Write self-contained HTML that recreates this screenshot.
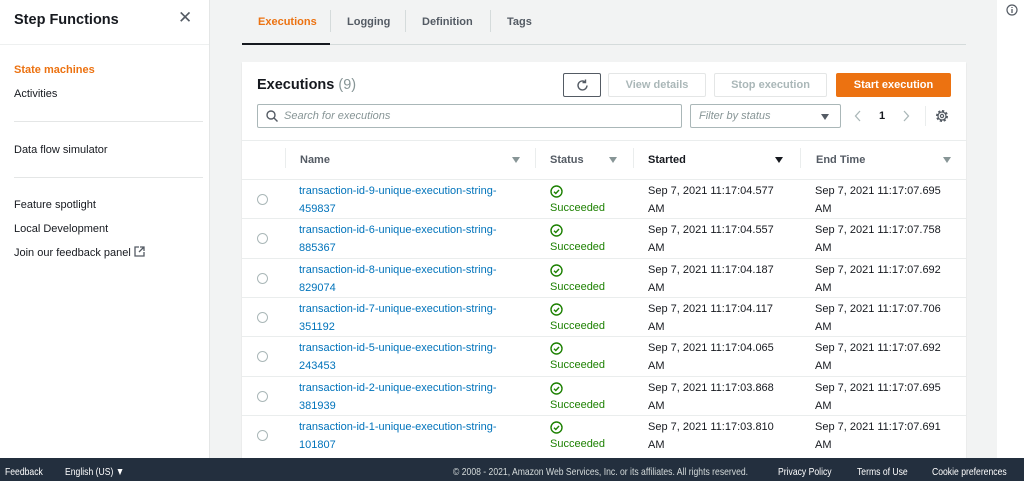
<!DOCTYPE html>
<html><head><meta charset="utf-8"><style>
*{box-sizing:border-box;margin:0;padding:0}
body{width:1024px;height:481px;overflow:hidden;background:#f2f3f3;font-family:"Liberation Sans",Arial,sans-serif;color:#16191f;position:relative}
.a{position:absolute}
.side{left:0;top:0;width:210px;height:458px;background:#fff;border-right:1px solid #e4e6e6}
.side div{position:absolute;left:14px;font-size:11px;color:#16191f}
.hr{position:absolute;left:5px;width:189px;height:1px;background:#e4e6e6}
.tab{top:16px;font-size:11px;font-weight:bold;color:#545b64}
.card{left:242px;top:62px;width:724px;height:396px;background:#fff;box-shadow:0 1px 1px rgba(0,0,0,.15)}
.btn{height:24px;border:1px solid #e4e6e6;font-size:11px;font-weight:bold;color:#aab7b8;text-align:center;line-height:22px;border-radius:2px;background:#fff}
.row{position:absolute;left:0;width:724px;height:39px;border-top:1px solid #eaeded;font-size:11px}
.row span{position:absolute;line-height:18px;top:2px}
.nm{left:57px;color:#0073bb}
.st{left:308px;color:#1d8102;top:19px!important}
.ti{left:406px}
.en{left:573px}
.rad{position:absolute;left:15px;top:14px;width:11px;height:11px;border:1px solid #aab7b8;border-radius:50%}
.ok{position:absolute;left:308px;top:5px}
.th{position:absolute;top:92px;font-size:11px;font-weight:bold;color:#545b64}
.sep{position:absolute;top:86px;width:1px;height:20px;background:#eaeded}
.tri{position:absolute;top:95px;width:0;height:0;border-left:4px solid transparent;border-right:4px solid transparent;border-top:6px solid #879596}
.foot{left:0;top:458px;width:1024px;height:23px;background:#232f3e;color:#fff;font-size:10.5px}
.foot span{position:absolute;top:8px;transform:scaleX(.82);transform-origin:left;white-space:nowrap}
</style></head><body>
<div class="a side">
<div style="top:12px;font-size:14.5px;font-weight:bold">Step Functions</div>
<div style="left:178px;top:8px;font-size:17px;color:#545b64">✕</div>
<div class="hr" style="top:44px;left:0;width:209px;background:#eef0f0"></div>
<div style="top:64px;color:#ec7211;font-weight:bold">State machines</div>
<div style="top:88px">Activities</div>
<div class="hr" style="top:121px"></div>
<div style="top:144px">Data flow simulator</div>
<div class="hr" style="top:177px"></div>
<div style="top:199px">Feature spotlight</div>
<div style="top:223px">Local Development</div>
<div style="top:246px">Join our feedback panel <svg width="11" height="11" viewBox="0 0 11 11" style="vertical-align:-1px"><path d="M5 1H1v9h9V6M6 1h4v4M10 1L5 6" fill="none" stroke="#545b64" stroke-width="1.3"/></svg></div>
</div>
<div class="a" style="left:997px;top:0;width:27px;height:458px;background:#fff"></div>
<svg class="a" style="left:1006px;top:4px" width="12" height="12"><circle cx="6" cy="6" r="5" fill="none" stroke="#545b64" stroke-width="1.2"/><path d="M6 5v4M6 3v1" stroke="#545b64" stroke-width="1.3"/></svg>
<div class="a tab" style="left:258px;color:#ec7211">Executions</div>
<div class="a" style="left:330px;top:10px;width:1px;height:22px;background:#d5dbdb"></div>
<div class="a tab" style="left:347px">Logging</div>
<div class="a" style="left:405px;top:10px;width:1px;height:22px;background:#d5dbdb"></div>
<div class="a tab" style="left:422px">Definition</div>
<div class="a" style="left:490px;top:10px;width:1px;height:22px;background:#d5dbdb"></div>
<div class="a tab" style="left:507px">Tags</div>
<div class="a" style="left:242px;top:44px;width:724px;height:1px;background:#d5dbdb"></div>
<div class="a" style="left:242px;top:43px;width:88px;height:2px;background:#16191f"></div>
<div class="a card">
<div class="a" style="left:15px;top:15px;font-size:14.5px;font-weight:bold">Executions <span style="font-weight:normal;color:#879596">(9)</span></div>
<div class="a btn" style="left:321px;top:11px;width:38px;border-color:#545b64;color:#545b64"><svg width="13" height="13" viewBox="0 0 13 13" style="margin-top:5px"><path d="M11 6.5A4.5 4.5 0 1 1 9 2.7M9.5 0.5v3h-3" fill="none" stroke="#545b64" stroke-width="1.4"/></svg></div>
<div class="a btn" style="left:366px;top:11px;width:98px">View details</div>
<div class="a btn" style="left:472px;top:11px;width:113px">Stop execution</div>
<div class="a btn" style="left:594px;top:11px;width:115px;background:#ec7211;border-color:#ec7211;color:#fff">Start execution</div>
<div class="a" style="left:15px;top:42px;width:425px;height:24px;border:1px solid #aab7b8;border-radius:2px"><svg class="a" style="left:8px;top:5px" width="12" height="12"><circle cx="5" cy="5" r="4" fill="none" stroke="#545b64" stroke-width="1.4"/><path d="M8 8l3.5 3.5" stroke="#545b64" stroke-width="1.4"/></svg><span class="a" style="left:26px;top:5px;font-size:11px;font-style:italic;color:#879596">Search for executions</span></div>
<div class="a" style="left:448px;top:42px;width:151px;height:24px;border:1px solid #aab7b8;border-radius:2px"><span class="a" style="left:8px;top:5px;font-size:11px;font-style:italic;color:#879596">Filter by status</span><div class="a" style="left:130px;top:9px;border-left:4px solid transparent;border-right:4px solid transparent;border-top:6px solid #545b64"></div></div>
<svg class="a" style="left:612px;top:48px" width="8" height="12"><path d="M6 1L1.5 6 6 11" fill="none" stroke="#aab7b8" stroke-width="1.3"/></svg>
<div class="a" style="left:637px;top:48px;font-size:11px;font-weight:bold">1</div>
<svg class="a" style="left:660px;top:48px" width="8" height="12"><path d="M2 1l4.5 5L2 11" fill="none" stroke="#aab7b8" stroke-width="1.3"/></svg>
<div class="a" style="left:683px;top:44px;width:1px;height:20px;background:#eaeded"></div>
<svg class="a" style="left:693px;top:47px" width="14" height="14" viewBox="0 0 14 14"><circle cx="7" cy="7" r="5" fill="none" stroke="#545b64" stroke-width="2" stroke-dasharray="2.2 1.7"/><circle cx="7" cy="7" r="4" fill="none" stroke="#545b64" stroke-width="1.2"/><circle cx="7" cy="7" r="1.6" fill="none" stroke="#545b64" stroke-width="1.2"/></svg>
<div class="a" style="left:0;top:78px;width:724px;height:1px;background:#eaeded"></div>
<div class="sep" style="left:43px"></div><div class="th" style="left:58px">Name</div><div class="tri" style="left:270px"></div>
<div class="sep" style="left:293px"></div><div class="th" style="left:308px">Status</div><div class="tri" style="left:367px"></div>
<div class="sep" style="left:391px"></div><div class="th" style="left:406px;color:#16191f">Started</div><div class="tri" style="left:533px;border-top-color:#16191f"></div>
<div class="sep" style="left:558px"></div><div class="th" style="left:574px">End Time</div><div class="tri" style="left:701px"></div>
<div id="rows"></div>
</div>
<div class="a foot">
<span style="left:5px">Feedback</span><span style="left:65px">English (US) ▼</span>
<span style="left:453px;color:#d5dbdb">© 2008 - 2021, Amazon Web Services, Inc. or its affiliates. All rights reserved.</span>
<span style="left:778px">Privacy Policy</span><span style="left:857px">Terms of Use</span><span style="left:932px">Cookie preferences</span>
</div>
<script>
var d=[["9","459837","04.577","07.695"],["6","885367","04.557","07.758"],["8","829074","04.187","07.692"],["7","351192","04.117","07.706"],["5","243453","04.065","07.692"],["2","381939","03.868","07.695"],["1","101807","03.810","07.691"]];
var h="";d.forEach(function(r,i){h+='<div class="row" style="top:'+(117+i*39.3)+'px"><div class="rad"></div><span class="nm">transaction-id-'+r[0]+'-unique-execution-string-<br>'+r[1]+'</span><svg class="ok" width="13" height="13" viewBox="0 0 13 13"><circle cx="6.5" cy="6.5" r="5.5" fill="none" stroke="#1d8102" stroke-width="1.4"/><path d="M4 6.7l1.8 1.8L9 5" fill="none" stroke="#1d8102" stroke-width="1.4"/></svg><span class="st">Succeeded</span><span class="ti">Sep 7, 2021 11:17:'+r[2]+'<br>AM</span><span class="en">Sep 7, 2021 11:17:'+r[3]+'<br>AM</span></div>';});
document.getElementById("rows").innerHTML=h;
</script>
</body></html>
